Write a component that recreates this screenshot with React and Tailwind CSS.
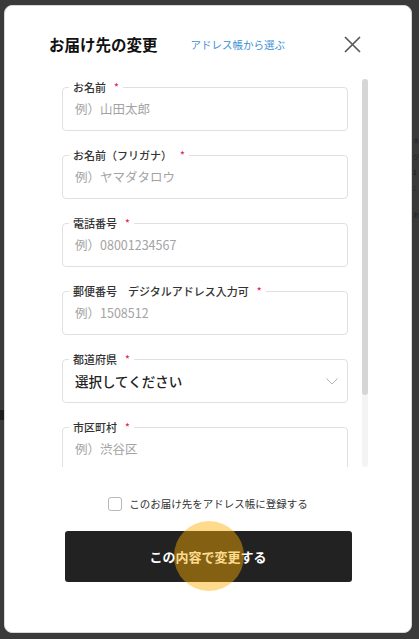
import React from "react";

const FONT = '"Noto Sans CJK JP", "Noto Sans", "Liberation Sans", sans-serif';

function Field({ label, placeholder, select = false }) {
  return (
    <fieldset className="m-0 min-w-0 rounded-[4px] border border-[#e0e0e0] pl-[6px] pr-[6px] pb-[6px] pt-0">
      <legend className="flex h-[14px] items-center px-[4px] text-[11px] leading-[14px] font-medium text-[#333]">
        <span>{label}</span>
        <span className="ml-[8px] text-[10px] text-[#e8175d]">*</span>
      </legend>
      <div className="flex h-[30px] items-center justify-between pl-[6px]">
        {select ? (
          <>
            <span className="text-[13.5px] font-medium text-[#222]">{placeholder}</span>
            <svg width="12" height="7" viewBox="0 0 12 7" className="mr-[3px]">
              <path d="M0.5 0.5 L6 6 L11.5 0.5" fill="none" stroke="#b5b5b5" strokeWidth="1" />
            </svg>
          </>
        ) : (
          <span className="text-[12.5px] text-[#a3a3a3]">{placeholder}</span>
        )}
      </div>
    </fieldset>
  );
}

export default function App() {
  return (
    <div
      className="relative h-[639px] w-[419px] overflow-hidden bg-[#3a3a3a]"
      style={{ fontFamily: FONT }}
    >
      {/* dimmed page behind the dialog */}
      <div className="absolute left-[413px] top-[136px] flex flex-col gap-[6px] text-[6px] leading-[10px] text-[#1e1e1e]">
        <span>ネ</span>
        <span>び</span>
        <span className="font-bold">1</span>
        <span className="text-[#2a2a2a]">1</span>
        <span className="mt-[10px]">お</span>
      </div>
      <div className="absolute left-0 top-[410px] h-[10px] w-[4px] bg-[#1c1c1c]" />

      <div className="ml-[4px] mt-[5px] flex h-[628px] w-[408px] flex-col rounded-[8px] border border-[#d8d8d8] bg-white">
        {/* header */}
        <div className="mt-[28px] flex h-[20px] items-center pl-[44px] pr-[50px]">
          <h2 className="text-[15.5px] font-bold leading-[20px] text-[#111]">お届け先の変更</h2>
          <span className="ml-[33px] mt-[1px] text-[10.5px] text-[#3a8fd6]">アドレス帳から選ぶ</span>
          <button className="ml-auto flex h-[18px] w-[18px] items-center justify-center">
            <svg width="17" height="17" viewBox="0 0 17 17">
              <path d="M1 1 L16 16 M16 1 L1 16" stroke="#555" strokeWidth="1.6" fill="none" />
            </svg>
          </button>
        </div>

        {/* form body */}
        <div className="mt-[24px] flex h-[389px] overflow-hidden pl-[57px]">
          <div className="flex w-[286px] shrink-0 flex-col gap-[17px] pt-[2px]">
            <Field label="お名前" placeholder="例）山田太郎" />
            <Field label="お名前（フリガナ）" placeholder="例）ヤマダタロウ" />
            <Field label="電話番号" placeholder="例）08001234567" />
            <Field label="郵便番号　デジタルアドレス入力可" placeholder="例）1508512" />
            <Field label="都道府県" placeholder="選択してください" select />
            <Field label="市区町村" placeholder="例）渋谷区" />
          </div>
          <div className="ml-[14px] mt-[1px] flex h-[388px] w-[6px] flex-col rounded-full bg-[#f4f4f4]">
            <div className="h-[316px] w-[6px] rounded-full bg-[#d6d6d6]" />
          </div>
        </div>

        {/* save option */}
        <label className="mt-[30px] flex h-[14px] items-center justify-center gap-[7px]">
          <span className="h-[14px] w-[14px] rounded-[3px] border border-[#b8b8b8] bg-white" />
          <span className="text-[10.5px] leading-[14px] text-[#333]">このお届け先をアドレス帳に登録する</span>
        </label>

        <button className="mx-auto mt-[20px] flex h-[51px] w-[287px] items-center justify-center rounded-[3px] bg-[#222] text-[13px] font-bold text-white">
          この内容で変更する
        </button>
      </div>

      {/* tap highlight */}
      <div className="pointer-events-none absolute left-[174px] top-[521px] h-[70px] w-[70px] rounded-full bg-[rgba(250,172,0,0.45)]" />
    </div>
  );
}
